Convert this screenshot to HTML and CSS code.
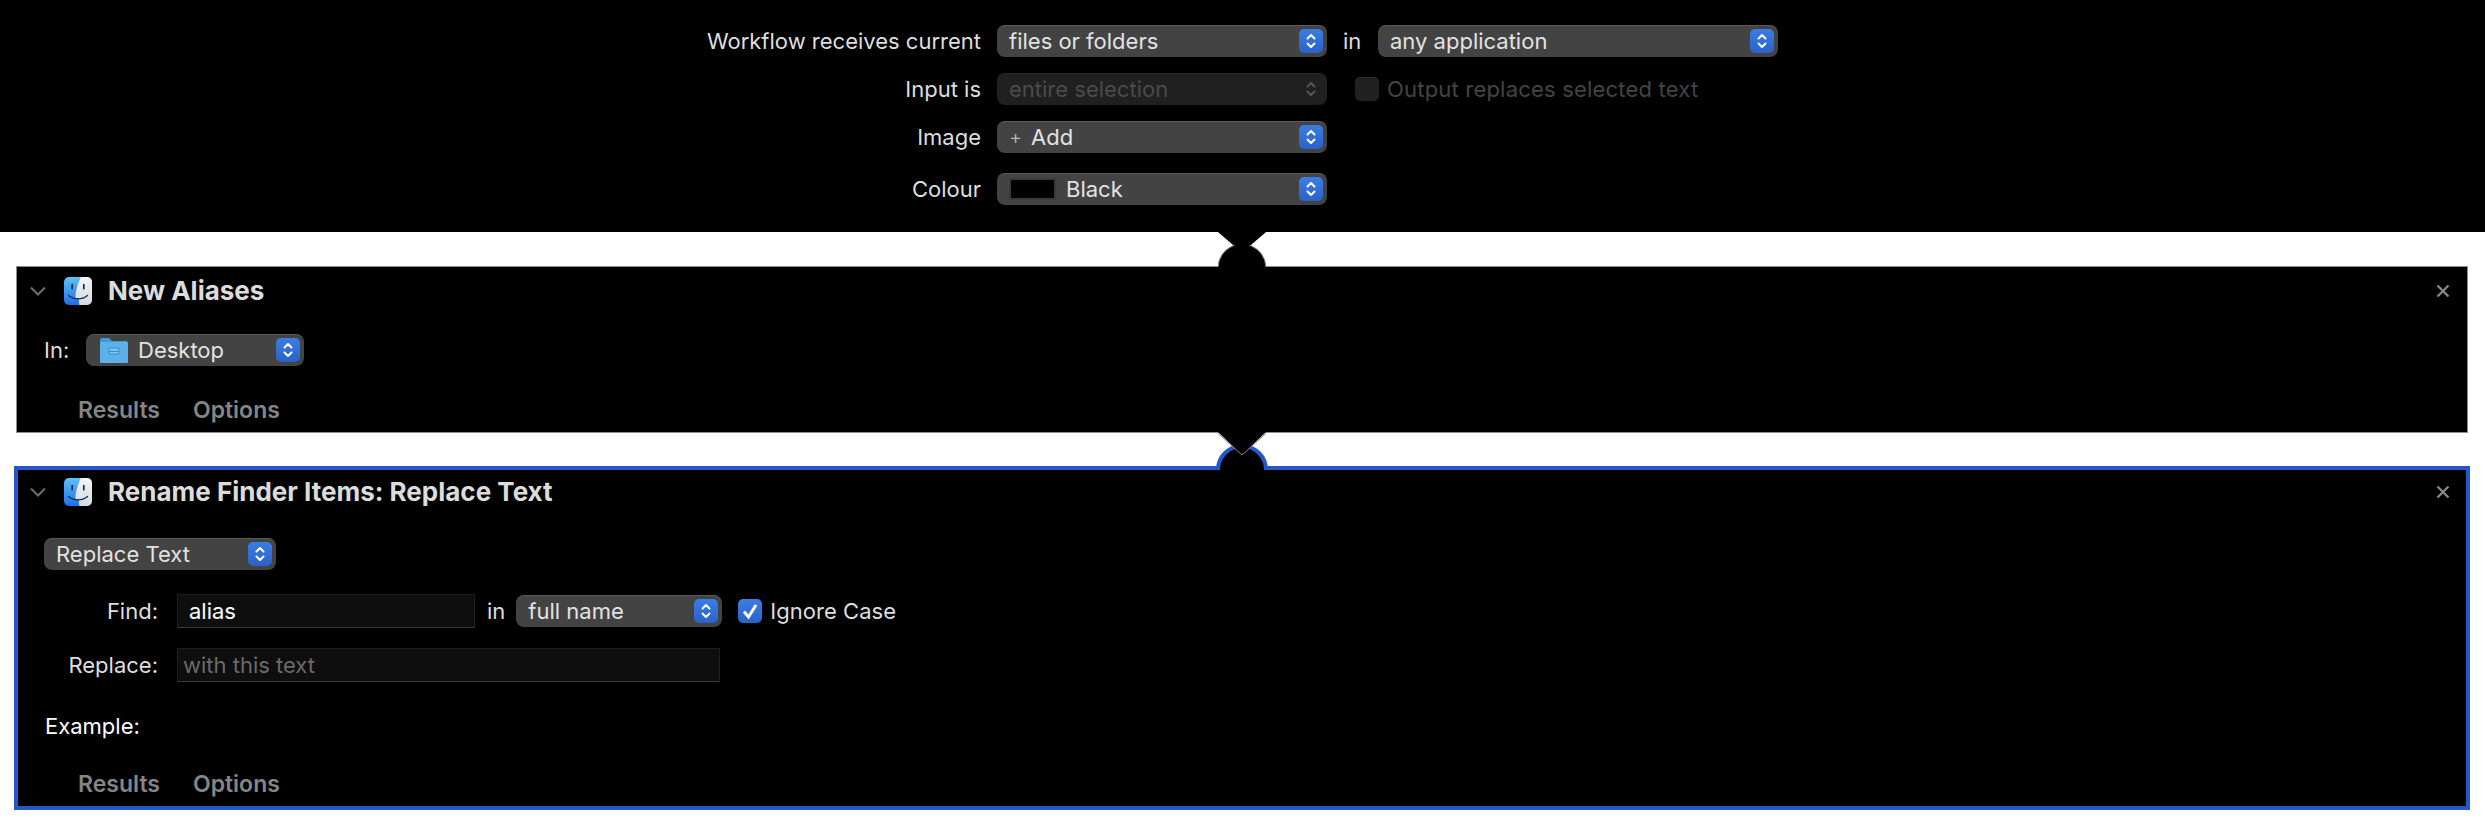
FILE: index.html
```html
<!DOCTYPE html>
<html>
  <head>
    <title>Automator Workflow</title>
    <link rel="stylesheet" href="styles.css">
  </head>
  <body>
    <svg class="defs" width="0" height="0">
      <defs>
        <symbol id="updown" viewBox="0 0 24 24">
          <path d="M8.500 9.500 12 6l3.500 3.500M8.500 14.500 12 18l3.500-3.500" fill="none" stroke="currentColor" stroke-width="2" stroke-linecap="round" stroke-linejoin="round"/>
        </symbol>
        <linearGradient id="finderBlue" x1="0" y1="0" x2="0" y2="1">
          <stop offset="0" stop-color="#5ec2f7"/>
          <stop offset="1" stop-color="#1e6fe6"/>
        </linearGradient>
        <linearGradient id="finderLight" x1="0" y1="0" x2="0" y2="1">
          <stop offset="0" stop-color="#f4f5f6"/>
          <stop offset="1" stop-color="#d5d9e2"/>
        </linearGradient>
        <symbol id="finder" viewBox="0 0 28 28">
          <rect width="28" height="28" rx="5" fill="url(#finderBlue)"/>
          <path d="M16.800 0H23a5 5 0 0 1 5 5v18a5 5 0 0 1-5 5h-7.600c-.4-2.300-.6-4.500-.6-6.800h-3.300C11.300 14.500 14 6.500 16.800 0z" fill="url(#finderLight)"/>
          <path d="M8.200 7.500v4.200M19.800 7.500v4.200" stroke="#1d2a44" stroke-width="1.700" stroke-linecap="round"/>
          <path d="M4.500 18.500c5.500 4.500 13.500 4.500 19 0" fill="none" stroke="#1d2a44" stroke-width="1.300" stroke-linecap="round"/>
        </symbol>
        <symbol id="x" viewBox="0 0 14 14">
          <path d="M1.500 1.500l11 11M12.500 1.500l-11 11" stroke="#8a8a8a" stroke-width="2.200"/>
        </symbol>
        <symbol id="chev" viewBox="0 0 16 10">
          <path d="M1 1.500 8 8.500l7-7" fill="none" stroke="#6e6e6e" stroke-width="2"/>
        </symbol>
      </defs>
    </svg>

    <div class="top">
      <div class="top-row">
        <span class="top-label">Workflow receives current</span>
        <div class="popup w-top">
          <span>files or folders</span>
          <span class="stepper"><svg><use href="#updown"/></svg></span>
        </div>
        <span class="in-top">in</span>
        <div class="popup w-app">
          <span>any application</span>
          <span class="stepper"><svg><use href="#updown"/></svg></span>
        </div>
      </div>
      <div class="top-row">
        <span class="top-label">Input is</span>
        <div class="popup w-top disabled">
          <span>entire selection</span>
          <span class="stepper"><svg><use href="#updown"/></svg></span>
        </div>
        <span class="check off"></span>
        <span class="check-text off-text">Output replaces selected text</span>
      </div>
      <div class="top-row">
        <span class="top-label">Image</span>
        <div class="popup w-top">
          <span class="plus">+</span>
          <span>Add</span>
          <span class="stepper"><svg><use href="#updown"/></svg></span>
        </div>
      </div>
      <div class="top-row last">
        <span class="top-label">Colour</span>
        <div class="popup w-top">
          <span class="swatch"></span>
          <span>Black</span>
          <span class="stepper"><svg><use href="#updown"/></svg></span>
        </div>
      </div>
    </div>

    <div class="panel aliases">
      <div class="panel-head">
        <svg class="chev"><use href="#chev"/></svg>
        <svg class="finder"><use href="#finder"/></svg>
        <span class="panel-title">New Aliases</span>
        <svg class="close"><use href="#x"/></svg>
      </div>
      <div class="in-row">
        <span class="in-label">In:</span>
        <div class="popup w-desk">
          <svg class="folder" viewBox="0 0 28 26">
            <path d="M0 3a2 2 0 0 1 2-2h7l3 3h14a2 2 0 0 1 2 2v18a2 2 0 0 1-2 2H2a2 2 0 0 1-2-2z" fill="#3f9bdc"/>
            <rect y="5" width="28" height="21" rx="1.500" fill="#5bb2ea"/>
            <path d="M9 11h10v6H9z" fill="#7cc3ef" stroke="#3b8ec9"/>
            <path d="M9 14.500h10" stroke="#3b8ec9"/>
          </svg>
          <span>Desktop</span>
          <span class="stepper"><svg><use href="#updown"/></svg></span>
        </div>
      </div>
      <div class="panel-foot first"><span>Results</span><span>Options</span></div>
    </div>

    <div class="panel rename">
      <div class="panel-head short">
        <svg class="chev"><use href="#chev"/></svg>
        <svg class="finder"><use href="#finder"/></svg>
        <span class="panel-title">Rename Finder Items: Replace Text</span>
        <svg class="close"><use href="#x"/></svg>
      </div>
      <div class="popup w-mode">
        <span>Replace Text</span>
        <span class="stepper"><svg><use href="#updown"/></svg></span>
      </div>
      <div class="find-row">
        <span class="field-label">Find:</span>
        <div class="field w-find">alias</div>
        <span class="in-find">in</span>
        <div class="popup w-name">
          <span>full name</span>
          <span class="stepper"><svg><use href="#updown"/></svg></span>
        </div>
        <span class="check on">
          <svg viewBox="0 0 24 24"><path d="M6 12.500l4.500 5.500L18 6" fill="none" stroke="#fff" stroke-width="3"/></svg>
        </span>
        <span class="check-text">Ignore Case</span>
      </div>
      <div class="replace-row">
        <span class="field-label">Replace:</span>
        <div class="field w-replace hint">with this text</div>
      </div>
      <div class="example">Example:</div>
      <div class="panel-foot"><span>Results</span><span>Options</span></div>
    </div>

    <!-- connectors between the actions -->
    <svg class="links" width="64" height="250" viewBox="1210 228 64 250">
      <path d="M1218 232H1266L1251 245H1233z" fill="#000"/>
      <path d="M1218 268A24 24 0 0 1 1266 268z" fill="#000"/>
      <path d="M1218 267A24 24 0 0 1 1233 245.800M1266 267A24 24 0 0 0 1251 245.800" fill="none" stroke="#8c8c8c"/>
      <path d="M1218 471A24 24 0 0 1 1266 471z" fill="#000"/>
      <path d="M1218 470A24 24 0 0 1 1266 470" fill="none" stroke="#2557c8" stroke-width="4"/>
      <path d="M1218 432L1242 455L1266 432z" fill="#000"/>
      <path d="M1218 433.500L1242 455L1266 433.500" fill="none" stroke="#8c8c8c"/>
    </svg>
  </body>
</html>
```

FILE: styles.css
```css
* {
  box-sizing: border-box;
}

body {
  margin: 0;
  height: 832px;
  overflow: hidden;
  position: relative;
  background-color: #fff;
  color: #dedede;
  font-family: Inter, "Liberation Sans", sans-serif;
  font-size: 22px;
}

.defs {
  display: block;
  height: 0;
}

svg {
  display: block;
}

/* top form */

.top {
  height: 232px;
  padding-top: 25px;
  background-color: #000;
}

.top-row {
  display: flex;
  align-items: center;
  height: 32px;
  margin-bottom: 16px;
}

.top-row:nth-child(3) {
  margin-bottom: 20px;
}

.top-label {
  flex: none;
  width: 981px;
  margin-right: 16px;
  padding-bottom: 1px;
  text-align: right;
}

.in-top {
  width: 35px;
  margin-left: 16px;
  padding-bottom: 1px;
}

/* popup buttons */

.popup {
  display: flex;
  align-items: center;
  flex: none;
  height: 32px;
  padding: 0 4px 2px 12px;
  background-color: #434343;
  border-top: 1px solid #5a5a5a;
  border-radius: 8px;
  color: #e2e2e2;
}

.w-top {
  width: 330px;
}

.w-app {
  width: 400px;
}

.w-desk {
  width: 218px;
  padding-left: 14px;
}

.w-mode {
  width: 232px;
  margin-top: 24px;
  margin-left: 26px;
}

.w-name {
  width: 206px;
}

.stepper {
  width: 24px;
  height: 24px;
  margin-left: auto;
  border-radius: 5px;
  color: #fff;
  background: linear-gradient(#3c7de2, #2a62c9);
}

.stepper svg {
  width: 24px;
  height: 24px;
}

.disabled {
  background-color: #202020;
  border-top-color: #2a2a2a;
  color: #4b4b4b;
}

.disabled .stepper {
  background: none;
  color: #555;
}

.plus {
  margin-right: 9px;
  font-weight: 300;
  font-size: 20px;
  color: #bbb;
}

.swatch {
  width: 47px;
  height: 22px;
  margin-right: 10px;
  background-color: #000;
  border: 2px solid #3a3a3a;
}

/* check boxes */

.check {
  flex: none;
  width: 24px;
  height: 24px;
  border-radius: 5px;
}

.check.off {
  margin-left: 28px;
  background-color: #202020;
  border-top: 1px solid #2a2a2a;
}

.check.on {
  margin-left: 16px;
  background: linear-gradient(#3c7de2, #2a62c9);
}

.check-text {
  margin-left: 8px;
  letter-spacing: 0.03px;
}

.off-text {
  letter-spacing: 0.2px;
  color: #444;
}

/* action panels */

.panel {
  background-color: #000;
}

.aliases {
  width: 2452px;
  height: 167px;
  margin: 34px 0 0 16px;
  border: 1px solid #8c8c8c;
}

.rename {
  width: 2456px;
  height: 344px;
  margin: 33px 0 0 14px;
  border: 4px solid #2557c8;
}

.panel-head {
  display: flex;
  align-items: center;
  height: 48px;
  padding-left: 13px;
  padding-right: 17px;
}

.panel-head.short {
  height: 44px;
  padding-left: 12px;
  padding-right: 16px;
}

.chev {
  width: 16px;
  height: 10px;
  margin-right: 18px;
}

.finder {
  width: 28px;
  height: 28px;
  margin-right: 16px;
}

.panel-title {
  padding-bottom: 1px;
  font-size: 26px;
  font-weight: 700;
  color: #dcdcdc;
}

.close {
  width: 14px;
  height: 14px;
  margin-left: auto;
}

.in-row {
  display: flex;
  align-items: center;
  margin-top: 19px;
  padding-left: 27px;
}

.in-label {
  width: 42px;
  padding-bottom: 1px;
}

.folder {
  width: 28px;
  height: 26px;
  margin-right: 10px;
}

.panel-foot {
  display: flex;
  gap: 33px;
  height: 24px;
  margin-top: 33px;
  padding-left: 60px;
  line-height: 24px;
  font-size: 23px;
  font-weight: 600;
  color: #858585;
}

.panel-foot.first {
  margin-top: 32px;
  padding-left: 61px;
}

/* find and replace */

.find-row,
.replace-row {
  display: flex;
  align-items: center;
  height: 34px;
}

.find-row {
  margin-top: 24px;
}

.replace-row {
  margin-top: 20px;
}

.field-label {
  width: 140px;
  margin-right: 19px;
  text-align: right;
}

.field {
  height: 34px;
  background-color: #0e0e0e;
  border: 1px solid #1e1e1e;
  border-bottom-color: #3a3a3a;
  line-height: 32px;
}

.w-find {
  width: 298px;
  padding-left: 11px;
  color: #fff;
}

.w-replace {
  width: 543px;
  padding-left: 5px;
}

.hint {
  color: #6a6a6a;
}

.in-find {
  margin: 0 11px 0 12px;
}

.example {
  height: 24px;
  margin-top: 32px;
  padding-left: 27px;
  line-height: 24px;
  color: #fff;
}

.rename .panel-foot {
  margin-top: 34px;
}

.links {
  position: absolute;
  left: 1210px;
  top: 228px;
}
```
